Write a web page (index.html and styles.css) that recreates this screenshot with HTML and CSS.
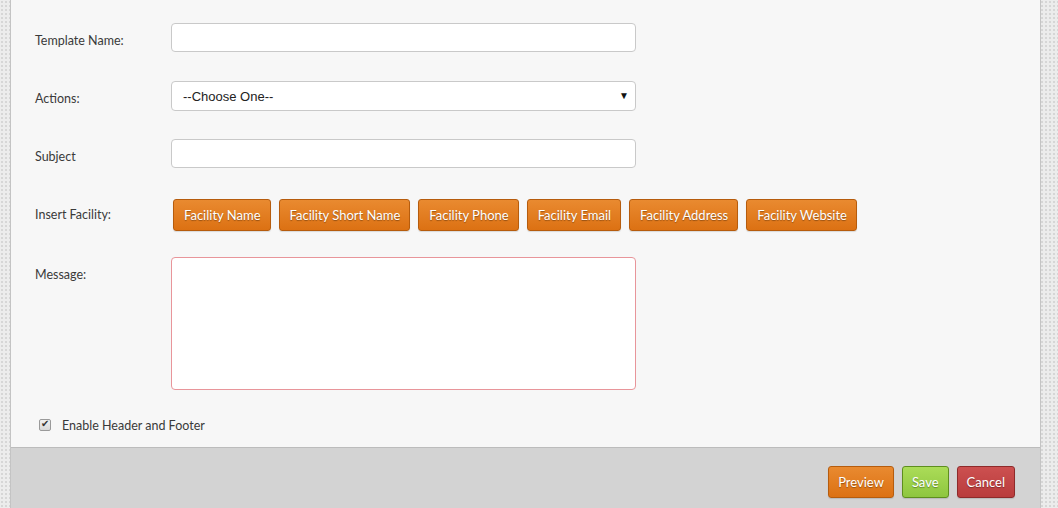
FILE: index.html
```html
<!DOCTYPE html>
<html>
<head>
<meta charset="utf-8">
<link rel="stylesheet" href="styles.css">
</head>
<body>
<div class="panel">
  <form class="form">
    <div class="row">
      <label class="label">Template Name:</label>
      <input class="field" type="text">
    </div>
    <div class="row row-select">
      <label class="label">Actions:</label>
      <div class="select-wrap">
        <select class="field select"><option>--Choose One--</option></select>
        <span class="arrow">▼</span>
      </div>
    </div>
    <div class="row row-subject">
      <label class="label">Subject</label>
      <input class="field" type="text">
    </div>
    <div class="row row-buttons">
      <label class="label">Insert Facility:</label>
      <div class="btn-group">
        <button type="button" class="btn btn-orange">Facility Name</button>
        <button type="button" class="btn btn-orange">Facility Short Name</button>
        <button type="button" class="btn btn-orange">Facility Phone</button>
        <button type="button" class="btn btn-orange">Facility Email</button>
        <button type="button" class="btn btn-orange">Facility Address</button>
        <button type="button" class="btn btn-orange">Facility Website</button>
      </div>
    </div>
    <div class="row">
      <label class="label">Message:</label>
      <textarea class="field textarea"></textarea>
    </div>
    <div class="check-row">
      <input class="check" type="checkbox" checked>
      <span class="check-label">Enable Header and Footer</span>
    </div>
  </form>
  <div class="footer">
    <button type="button" class="btn btn-orange">Preview</button>
    <button type="button" class="btn btn-green">Save</button>
    <button type="button" class="btn btn-red">Cancel</button>
  </div>
</div>
</body>
</html>
```

FILE: styles.css
```css
html, body {
  margin: 0;
  padding: 0;
  height: 100%;
}
body {
  background-color: #ececec;
  background-image: radial-gradient(circle, #d6d6d6 0.8px, transparent 1px);
  background-size: 4px 4px;
  font-family: "Lato", "Liberation Sans", sans-serif;
  color: #333;
  overflow: hidden;
}
.panel {
  margin-left: 10px;
  width: 1029px;
  height: 100%;
  background: #f7f7f7;
  border-left: 1px solid #c4c4c4;
  border-right: 1px solid #c4c4c4;
  display: flex;
  flex-direction: column;
}
.form {
  padding: 23px 0 0 24px;
  display: flex;
  flex-direction: column;
}
.row {
  display: flex;
  align-items: flex-start;
  margin-bottom: 29px;
}
.row-select {
  margin-bottom: 28px;
}
.row-subject {
  margin-bottom: 31px;
}
.row-buttons {
  margin-bottom: 26px;
}
.label {
  width: 136px;
  flex: none;
  font-size: 12.5px;
  padding-top: 10px;
  color: #3a3a3a;
}
.row-buttons .label {
  padding-top: 8px;
}
.field {
  box-sizing: border-box;
  width: 465px;
  height: 29px;
  margin: 0;
  border: 1px solid #c9c9c9;
  border-radius: 4px;
  background: #fff;
  font-family: "Liberation Sans", Arial, sans-serif;
  font-size: 13px;
  color: #222;
  outline: none;
}
.select-wrap {
  position: relative;
  width: 465px;
}
.select {
  height: 30px;
  padding-left: 11px;
  -webkit-appearance: none;
  appearance: none;
}
.arrow {
  position: absolute;
  right: 7px;
  top: 8px;
  font-size: 10px;
  color: #111;
  pointer-events: none;
}
.textarea {
  height: 133px;
  resize: none;
  border-color: #e8959a;
}
.btn-group {
  display: flex;
  gap: 8px;
  padding-left: 2px;
}
.btn {
  box-sizing: border-box;
  height: 32px;
  margin: 0;
  padding: 0 9px;
  border-radius: 3px;
  font-family: "Lato", "Liberation Sans", sans-serif;
  font-size: 13px;
  color: #fff;
  text-shadow: 0 1px 1px rgba(0, 0, 0, 0.35);
  cursor: pointer;
  box-shadow: 0 1px 1px rgba(0, 0, 0, 0.12);
}
.btn-group .btn {
  padding: 0 9px 0 10px;
}
.btn-orange {
  background: linear-gradient(#e98a30, #dc7113);
  border: 1px solid #b65c0d;
}
.btn-green {
  background: linear-gradient(#abdc58, #8ec63f);
  border: 1px solid #5e8e1e;
}
.btn-red {
  background: linear-gradient(#cc5050, #b93c3c);
  border: 1px solid #8e2a2a;
}
.check-row {
  display: flex;
  align-items: center;
  margin-top: -1px;
  padding-left: 4px;
  height: 14px;
}
.check {
  -webkit-appearance: none;
  appearance: none;
  box-sizing: border-box;
  width: 12px;
  height: 12px;
  margin: 0 11px 0 0;
  border: 1px solid #9a9a9a;
  border-radius: 2px;
  background: linear-gradient(#f0f0f0, #d8d8d8);
  position: relative;
}
.check::after {
  content: "✔";
  position: absolute;
  left: 1px;
  top: -2px;
  font-size: 10px;
  color: #333;
  font-family: "DejaVu Sans", sans-serif;
}
.check-label {
  font-size: 12.5px;
  color: #3a3a3a;
}
.footer {
  margin-top: 15px;
  flex: 1;
  background: #d3d3d3;
  border-top: 1px solid #bcbcbc;
  display: flex;
  justify-content: flex-end;
  align-items: flex-start;
  gap: 8px;
  padding: 18px 25px 0 0;
}
```
